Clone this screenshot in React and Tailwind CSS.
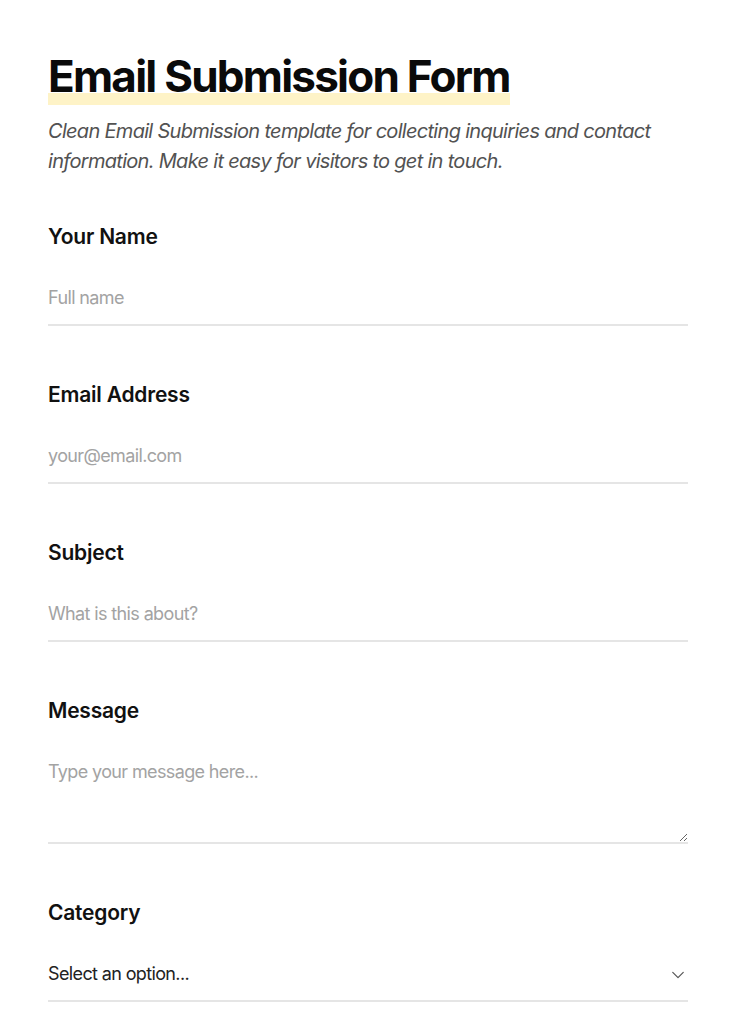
import React from "react";

function Field({ label, children }) {
  return (
    <div className="flex flex-col mb-[55px]">
      <label className="text-[21px] leading-[28px] font-semibold text-[#111111] mb-[21px] tracking-[-0.01em]">{label}</label>
      {children}
    </div>
  );
}

export default function App() {
  const inputCls =
    "w-full bg-transparent border-0 border-b-2 border-[#e5e5e5] py-3 text-[18px] leading-[28px] tracking-[-0.035em] text-[#222] placeholder:text-[#a3a3a3] outline-none";
  return (
    <div className="min-h-screen bg-white" style={{ fontFamily: "Inter, 'Noto Sans', sans-serif" }}>
      <div className="px-12 pt-[52px]">
        <h1 className="relative inline-block text-[44px] leading-[48px] font-bold text-[#0a0a0a] tracking-[-0.04em]">
          <span className="absolute left-0 right-0 bottom-[-5px] h-[12px] bg-[#fef3c7]"></span>
          <span className="relative">Email Submission Form</span>
        </h1>
        <p className="mt-[16px] text-[20px] leading-[30px] italic text-[#525252] tracking-[-0.035em]">
          Clean Email Submission template for collecting inquiries and contact information. Make it easy for visitors to get in touch.
        </p>
        <form className="mt-[47px]">
          <Field label="Your Name">
            <input className={inputCls} placeholder="Full name" />
          </Field>
          <Field label="Email Address">
            <input className={inputCls} placeholder="your@email.com" />
          </Field>
          <Field label="Subject">
            <input className={inputCls} placeholder="What is this about?" />
          </Field>
          <Field label="Message">
            <textarea className={inputCls + " h-[98px] resize-y"} placeholder="Type your message here..." />
          </Field>
          <Field label="Category">
            <div className="relative">
              <select className={inputCls + " appearance-none pr-8"} defaultValue="">
                <option value="" disabled>Select an option...</option>
                <option>General</option>
              </select>
              <svg className="absolute right-[1px] top-1/2 -translate-y-1/2 pointer-events-none" width="18" height="18" viewBox="0 0 24 24" fill="none" stroke="#555" strokeWidth="1.6" strokeLinecap="round" strokeLinejoin="round">
                <path d="M5 8.5l7 7 7-7" />
              </svg>
            </div>
          </Field>
        </form>
      </div>
    </div>
  );
}
